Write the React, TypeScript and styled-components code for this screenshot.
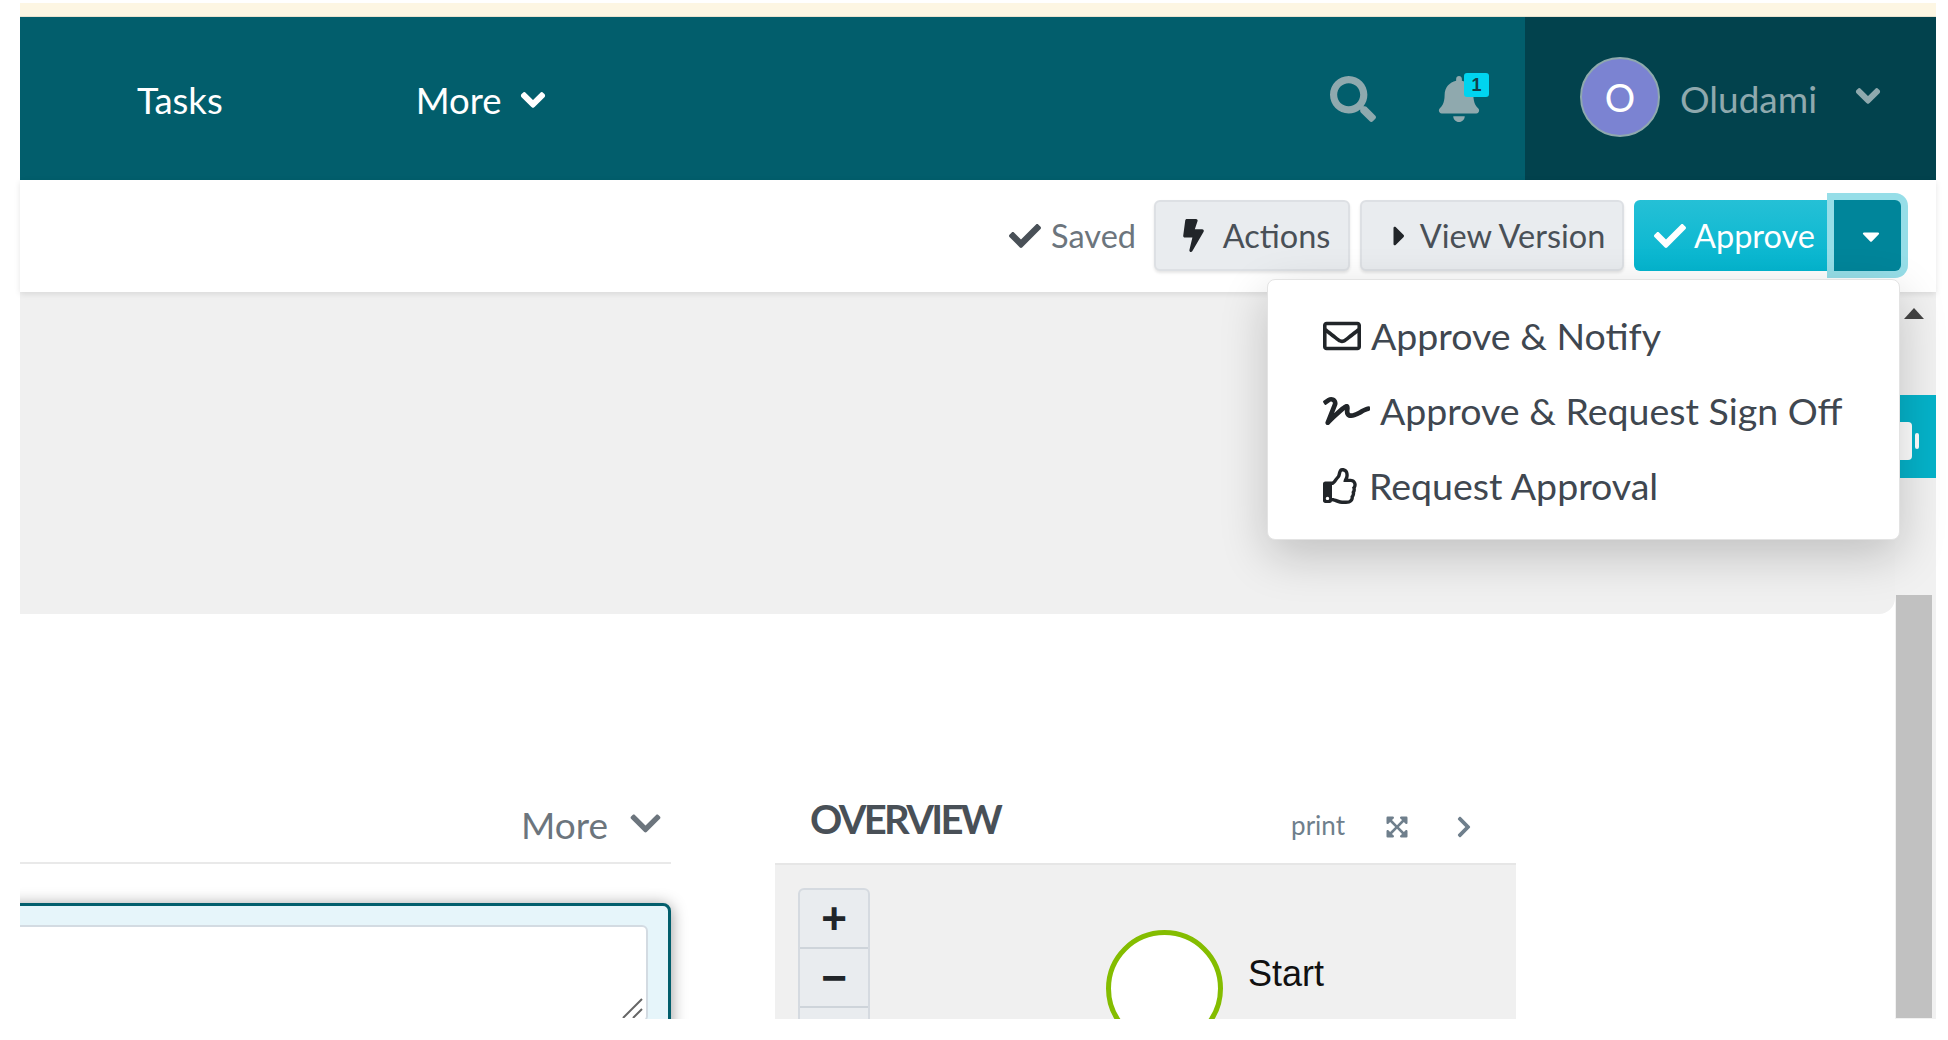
import React from "react";
import styled, { createGlobalStyle } from "styled-components";
import {
  FaBell,
  FaBolt,
  FaCaretDown,
  FaCaretRight,
  FaCheck,
  FaChevronDown,
  FaChevronRight,
  FaExpandArrowsAlt,
  FaRegEnvelope,
  FaRegThumbsUp,
  FaSearch,
  FaSignature,
} from "react-icons/fa";

const Global = createGlobalStyle`
  html, body { margin: 0; padding: 0; background: #fff; }
  body { font-family: Lato, "Noto Sans", sans-serif; overflow: hidden; }
  * { box-sizing: border-box; }
`;

const Page = styled.div`
  width: 1948px;
  height: 1040px;
  padding: 3px 12px 0 20px;
  background: #fff;
  overflow: hidden;
`;
const Strip = styled.div`
  height: 14px;
  background: #fdf6e3;
  border-bottom: 1px solid #e8e2d0;
`;
const Nav = styled.header`
  height: 163px;
  display: flex;
  align-items: stretch;
  background: #025e6c;
  color: #fff;
`;
const NavLinks = styled.nav`
  flex: 1;
  display: flex;
  align-items: center;
  gap: 193px;
  padding: 3px 0 0 117px;
`;
const NavLink = styled.a`
  display: flex;
  align-items: center;
  gap: 18px;
  font-size: 36.5px;
  line-height: 1;
  color: #fff;
  svg { width: 26px; height: 26px; stroke: currentColor; stroke-width: 40px; }
`;
const NavIcons = styled.div`
  display: flex;
  align-items: center;
  gap: 62px;
  padding-right: 45px;
  color: #8fa9ae;
`;
const SearchIcon = styled(FaSearch)`
  width: 46px;
  height: 46px;
`;
const BellWrap = styled.div`
  position: relative;
  display: flex;
  svg { width: 42px; height: 46px; }
`;
const Badge = styled.span`
  position: absolute;
  top: -3px;
  left: 26px;
  width: 25px;
  height: 24px;
  border-radius: 3px;
  background: #00d4f0;
  color: #124049;
  font: 700 18px/24px "Liberation Sans", sans-serif;
  text-align: center;
`;
const UserBox = styled.div`
  width: 411px;
  display: flex;
  align-items: center;
  padding-left: 55px;
  background: #02424d;
  color: #8fa9ae;
`;
const Avatar = styled.div`
  width: 80px;
  height: 80px;
  margin-top: -4px;
  border-radius: 50%;
  border: 2px solid #8fa9ae;
  background: #7b83d2;
  color: #fff;
  font: 400 38px/76px Lato, sans-serif;
  text-align: center;
`;
const UserName = styled.span`
  margin-left: 20px;
  font-size: 37px;
`;
const UserChevron = styled(FaChevronDown)`
  width: 26px;
  height: 26px;
  margin-left: 38px;
  margin-top: -6px;
  stroke: currentColor;
  stroke-width: 40px;
`;

const Toolbar = styled.div`
  position: relative;
  z-index: 3;
  height: 112px;
  display: flex;
  align-items: flex-start;
  justify-content: flex-end;
  gap: 10px;
  padding: 20px 35px 0 0;
  background: #fff;
  box-shadow: 0 2px 6px rgba(0, 0, 0, 0.1);
`;
const Saved = styled.div`
  height: 71px;
  display: flex;
  align-items: center;
  gap: 9px;
  margin-right: 8px;
  font-size: 32.5px;
  color: #6c757d;
  svg { width: 34px; height: 32px; color: #495057; }
`;
const GreyButton = styled.button<{ $w: number; $gap: number; $shift: number }>`
  height: 71px;
  display: flex;
  align-items: center;
  justify-content: center;
  gap: ${(p) => p.$gap}px;
  padding: 0 0 0 ${(p) => p.$shift}px;
  width: ${(p) => p.$w}px;
  border: 2px solid #dde0e4;
  border-radius: 6px;
  background: #e9ecef;
  box-shadow: 0 2px 3px rgba(0, 0, 0, 0.1);
  color: #495057;
  font: 400 32.5px Lato, sans-serif;
`;
const BoltIcon = styled(FaBolt)`
  width: 21px;
  height: 33px;
  color: #212529;
`;
const CaretIcon = styled(FaCaretRight)`
  width: 17px;
  height: 32px;
  color: #212529;
`;
const SplitButton = styled.div`
  display: flex;
  height: 71px;
`;
const ApproveButton = styled.button`
  width: 200px;
  display: flex;
  align-items: center;
  gap: 6px;
  padding: 0 0 0 18px;
  border: 0;
  border-radius: 6px 0 0 6px;
  background: linear-gradient(#25c0d6, #04b5cf);
  color: #fff;
  font: 400 32.5px Lato, sans-serif;
  svg { width: 36px; height: 32px; }
`;
const ToggleButton = styled.button`
  width: 67px;
  display: flex;
  align-items: center;
  justify-content: center;
  padding: 0 0 0 7px;
  border: 0;
  border-radius: 0 6px 6px 0;
  background: #00859a;
  box-shadow: 0 0 0 7px #96dee8;
  color: #fff;
  svg { width: 20px; height: 28px; }
`;
const Menu = styled.div`
  position: absolute;
  top: 99px;
  right: 36px;
  width: 633px;
  height: 261px;
  padding: 18px 0 14px 55px;
  background: #fff;
  border: 1px solid #e3e3e3;
  border-radius: 8px;
  box-shadow: 0 16px 48px rgba(0, 0, 0, 0.2);
`;
const MenuItem = styled.div`
  height: 75px;
  display: flex;
  align-items: center;
  gap: 10px;
  font-size: 37.5px;
  color: #3f4750;
  white-space: nowrap;
  svg { color: #212529; flex: none; }
`;
const MailIcon = styled(FaRegEnvelope)`
  width: 38px;
  height: 38px;
`;
const SignIcon = styled(FaSignature)`
  width: 47px;
  height: 38px;
`;
const ThumbIcon = styled(FaRegThumbsUp)`
  width: 36px;
  height: 40px;
`;

const Main = styled.main`
  position: relative;
  height: 727px;
  display: flex;
`;
const Content = styled.div`
  width: 1875px;
  display: flex;
  flex-direction: column;
`;
const Hero = styled.section`
  height: 322px;
  background: #f0f0f0;
  border-bottom-right-radius: 16px;
`;
const Lower = styled.section`
  height: 405px;
  display: flex;
  gap: 104px;
  overflow: hidden;
`;
const LeftCol = styled.div`
  width: 651px;
  display: flex;
  flex-direction: column;
`;
const LeftHead = styled.div`
  height: 250px;
  flex: none;
  display: flex;
  align-items: flex-end;
  justify-content: flex-end;
  gap: 20px;
  padding: 0 8px 19px 0;
  border-bottom: 2px solid #e9e9e9;
  color: #6c757d;
  font-size: 37px;
  line-height: 1;
  svg { width: 35px; height: 35px; margin-bottom: 2px; }
`;
const Composer = styled.div`
  position: relative;
  flex: none;
  width: 671px;
  height: 160px;
  margin: 39px 0 0 -20px;
  padding: 19px 20px 0 0;
  background: #e6f5fa;
  border: 3px solid #025e6c;
  border-radius: 8px;
  box-shadow: 0 2px 16px rgba(0, 0, 0, 0.42);
`;
const ComposerInput = styled.div`
  position: relative;
  height: 97px;
  background: #fff;
  border: 2px solid #d3dbe2;
  border-radius: 6px;
`;
const ResizeHandle = styled.svg`
  position: absolute;
  right: 2px;
  bottom: 2px;
  width: 22px;
  height: 20px;
`;
const RightCol = styled.div`
  width: 741px;
  display: flex;
  flex-direction: column;
`;
const OverviewHead = styled.div`
  height: 249px;
  flex: none;
  display: flex;
  align-items: flex-end;
  padding: 0 44px 24px 35px;
  color: #6f7f8c;
`;
const OverviewTitle = styled.h2`
  flex: 1;
  margin: 0;
  font-size: 40px;
  line-height: 1;
  font-weight: 700;
  letter-spacing: -2.7px;
  color: #495057;
`;
const PrintLink = styled.a`
  font-size: 26px;
  line-height: 1;
  margin-right: 40px;
  margin-bottom: 1px;
`;
const ExpandIcon = styled(FaExpandArrowsAlt)`
  width: 24px;
  height: 24px;
  margin-right: 47px;
`;
const NextIcon = styled(FaChevronRight)`
  width: 16px;
  height: 24px;
`;
const Canvas = styled.div`
  position: relative;
  flex: 1;
  background: #f0f0f0;
  border-top: 2px solid #e6e6e6;
`;
const ZoomGroup = styled.div`
  position: absolute;
  left: 23px;
  top: 23px;
  width: 72px;
  border: 2px solid #d5dae0;
  border-radius: 6px;
  overflow: hidden;
  background: #e9ecef;
`;
const ZoomButton = styled.div`
  height: 59px;
  display: flex;
  align-items: center;
  justify-content: center;
  border-bottom: 2px solid #ced4da;
  color: #212529;
  font: 700 44px/1 "Liberation Sans", sans-serif;
`;
const StartNode = styled.div`
  position: absolute;
  left: 331px;
  top: 65px;
  width: 117px;
  height: 117px;
  border-radius: 50%;
  border: 5px solid #84bd00;
  background: #fff;
`;
const StartLabel = styled.span`
  position: absolute;
  left: 473px;
  top: 88px;
  font: 400 36px/41px "Liberation Sans", sans-serif;
  color: #111;
`;
const ScrollTrack = styled.div`
  width: 41px;
  display: flex;
  flex-direction: column;
  align-items: flex-start;
  background: #f1f1f1;
`;
const ScrollUp = styled.div`
  width: 0;
  height: 0;
  margin: 16px 0 0 9px;
  border-left: 10px solid transparent;
  border-right: 10px solid transparent;
  border-bottom: 11px solid #444;
`;
const ScrollThumb = styled.div`
  width: 36px;
  height: 423px;
  margin: 276px 0 0 1px;
  background: #c1c1c1;
`;
const SideTab = styled.div`
  position: absolute;
  top: 103px;
  right: 0;
  width: 36px;
  height: 83px;
  display: flex;
  align-items: center;
  padding-top: 8px;
  background: #05b2c9;
  z-index: 1;
`;
const SideIcon = styled.svg`
  width: 19px;
  height: 38px;
`;

export default function App() {
  return (
    <Page>
      <Global />
      <Strip />
      <Nav>
        <NavLinks>
          <NavLink>Tasks</NavLink>
          <NavLink>
            More <FaChevronDown />
          </NavLink>
        </NavLinks>
        <NavIcons>
          <SearchIcon />
          <BellWrap>
            <FaBell />
            <Badge>1</Badge>
          </BellWrap>
        </NavIcons>
        <UserBox>
          <Avatar>O</Avatar>
          <UserName>Oludami</UserName>
          <UserChevron />
        </UserBox>
      </Nav>
      <Toolbar>
        <Saved>
          <FaCheck /> Saved
        </Saved>
        <GreyButton $w={196} $gap={19} $shift={9}>
          <BoltIcon /> Actions
        </GreyButton>
        <GreyButton $w={264} $gap={12} $shift={12}>
          <CaretIcon /> View Version
        </GreyButton>
        <SplitButton>
          <ApproveButton>
            <FaCheck /> Approve
          </ApproveButton>
          <ToggleButton>
            <FaCaretDown />
          </ToggleButton>
        </SplitButton>
        <Menu>
          <MenuItem>
            <MailIcon /> Approve &amp; Notify
          </MenuItem>
          <MenuItem>
            <SignIcon /> Approve &amp; Request Sign Off
          </MenuItem>
          <MenuItem>
            <ThumbIcon /> Request Approval
          </MenuItem>
        </Menu>
      </Toolbar>
      <Main>
        <Content>
          <Hero />
          <Lower>
            <LeftCol>
              <LeftHead>
                More <FaChevronDown />
              </LeftHead>
              <Composer>
                <ComposerInput>
                  <ResizeHandle viewBox="0 0 22 20">
                    <path d="M1 20 L20 1 M11 20 L20 11" stroke="#666" strokeWidth="2" fill="none" />
                  </ResizeHandle>
                </ComposerInput>
              </Composer>
            </LeftCol>
            <RightCol>
              <OverviewHead>
                <OverviewTitle>OVERVIEW</OverviewTitle>
                <PrintLink>print</PrintLink>
                <ExpandIcon />
                <NextIcon />
              </OverviewHead>
              <Canvas>
                <ZoomGroup>
                  <ZoomButton>+</ZoomButton>
                  <ZoomButton>−</ZoomButton>
                  <ZoomButton />
                </ZoomGroup>
                <StartNode />
                <StartLabel>Start</StartLabel>
              </Canvas>
            </RightCol>
          </Lower>
        </Content>
        <ScrollTrack>
          <ScrollUp />
          <ScrollThumb />
        </ScrollTrack>
        <SideTab>
          <SideIcon viewBox="0 0 19 38">
            <path d="M0 0h8a4 4 0 0 1 4 4v30a4 4 0 0 1-4 4H0z" fill="#fff" />
            <rect x="15" y="11" width="4" height="16" rx="2" fill="#fff" />
          </SideIcon>
        </SideTab>
      </Main>
    </Page>
  );
}
